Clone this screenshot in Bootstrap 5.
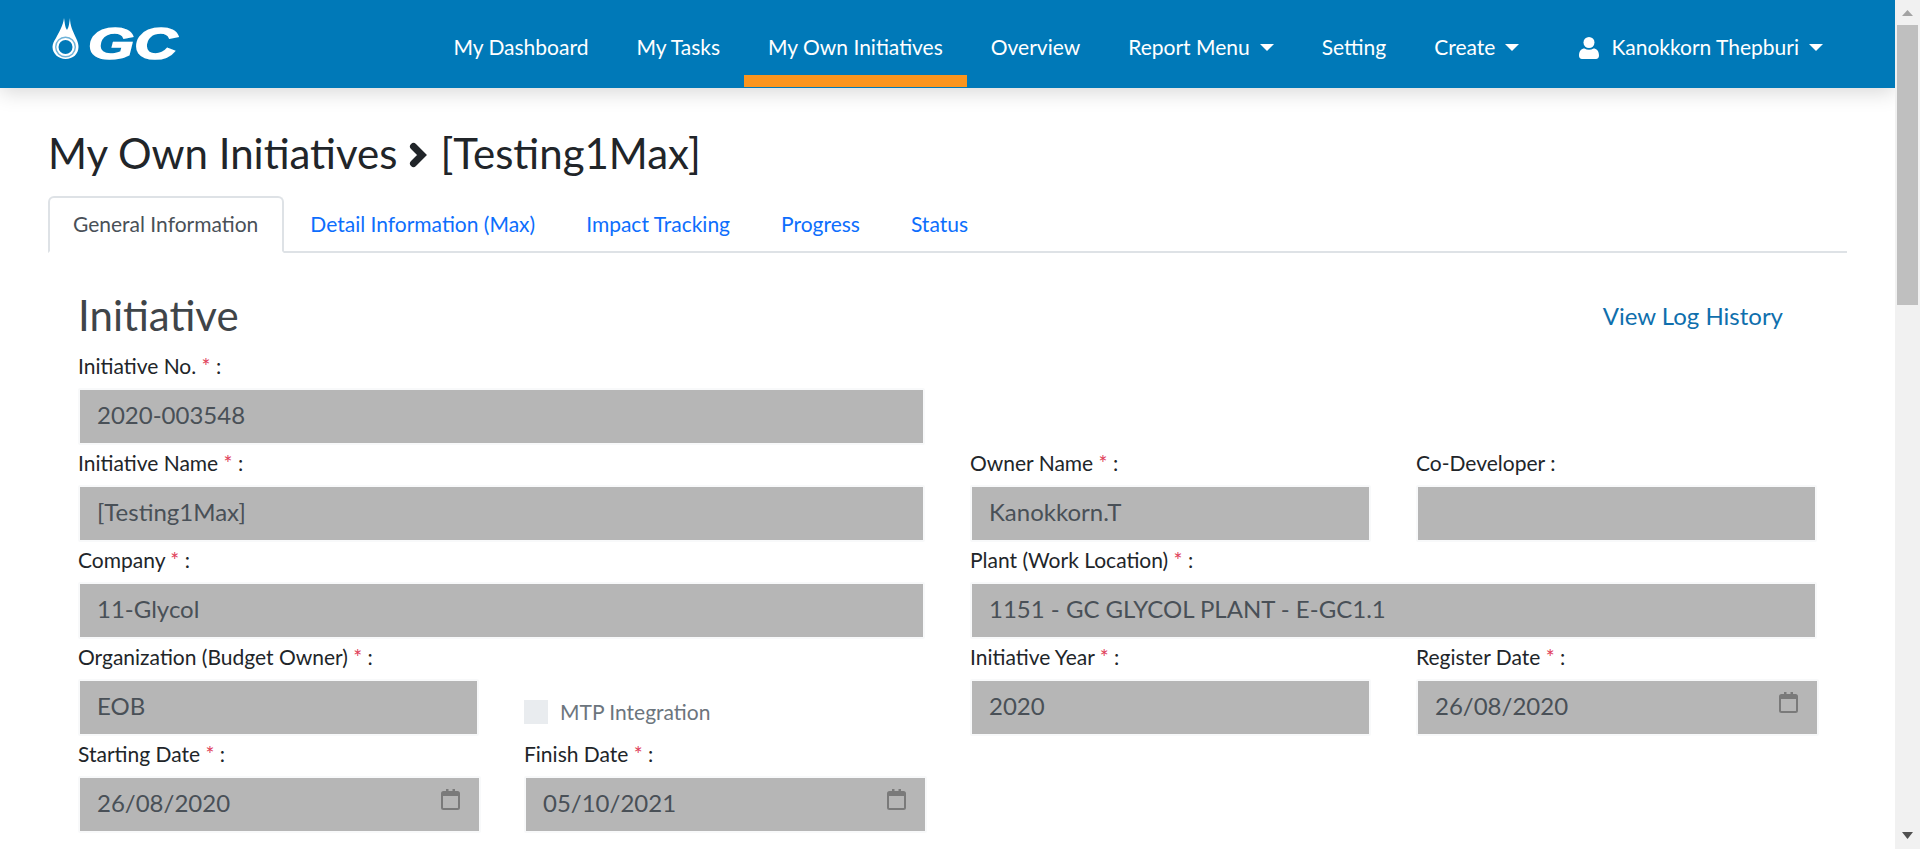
<!doctype html>
<html lang="en"><head><meta charset="utf-8"><title>My Own Initiatives</title>
<link href="https://cdn.jsdelivr.net/npm/bootstrap@5.3.0/dist/css/bootstrap.min.css" rel="stylesheet">
<style>
html,body{height:100%;overflow:hidden}
body{font-family:Lato,sans-serif;color:#212529;background:#fff}
.app-frame{height:849px}
.app-main{flex:1 1 auto;min-width:0;overflow:hidden}
.fake-scroll{width:25px;flex:none;background:#f1f1f1;height:849px}
.fake-thumb{width:21px;height:280px;background:#bfbfbf;margin:9px auto 0}
.arrow-up{margin:10px auto 0;display:block}
.arrow-down{margin:auto auto 10px;display:block}
.topbar{background:#0079b8;height:88px;box-shadow:0 4px 20px rgba(0,0,0,.16);padding:0 48px 0 50px;position:relative;z-index:2}
.topbar.navbar-expand .navbar-nav .nav-link{color:#fff;font-size:21px;padding:0 24px;height:86px;line-height:92px;white-space:nowrap;position:relative}
.topbar .dropdown-toggle::after{margin-left:10px;vertical-align:.2em;border-top-width:7px;border-left-width:7px;border-right-width:7px}
.topbar.navbar-expand .navbar-nav .nav-link.here::before{content:"";position:absolute;left:0;right:0;bottom:0;height:12px;background:#fb951e}
.topbar .who{margin-left:12px}
.who-icon{vertical-align:-4px;margin-right:12px}
.brand-link{margin-bottom:8px}
.page-body{padding:41px 48px 0}
.pagehead{font-size:42px;font-weight:400;margin:0;line-height:48px;color:#212529}
.head-chevron{margin:0 13px 0 12px;vertical-align:1px}
.tabbar{margin-top:19px;border-bottom:2px solid #dee2e6}
.tabbar .nav-link{font-size:21px;line-height:31px;padding:12px 25px 12px;color:#0d6efd;border:0;margin:0}
.tabbar .nav-item+.nav-item .nav-link{padding-left:26px;padding-right:25px}
.tabbar .nav-link.active{color:#495057;border:2px solid #dee2e6;border-bottom:2px solid #fff;border-radius:6px 6px 0 0;padding:10px 24px 12px 23px;margin-bottom:-2px}
.form-pane{padding:38px 30px 0}
.head-line{height:48px;margin-bottom:14px}
.initi{font-size:42px;font-weight:400;color:#3f4549;line-height:48px;margin:0}
.loglink{font-size:24px;color:#0f6fad;text-decoration:none;margin-right:34px;position:relative;top:1px}
.form-row{--bs-gutter-x:45px;--bs-gutter-y:0}
.form-block{height:97px}
.form-label{font-size:21px;margin:0 0 9px;line-height:26px;color:#212529;display:block}
.req{color:#e0405a}
.form-control.grey-input,.form-control.grey-input:disabled{background:#b6b6b6;border:2px solid #f8f9fa;border-radius:2px;height:57px;font-size:24px;color:#495057;padding:0 17px 5px;box-shadow:none;opacity:1}
.date-wrap{margin-right:-2px}
.date-icon{position:absolute;right:21px;top:13px}
.mtp-wrap{height:97px;padding-top:52px}
.mtp-box.form-check-input{width:24px;height:24px;margin:1px 0 0;background:#e9ecef;border:0;border-radius:0;opacity:1;float:none}
.form-check-input:disabled~.form-check-label.mtp-text{font-size:21px;color:#6c757d;opacity:1;margin-left:12px}
</style></head>
<body>
<div class="app-frame d-flex">
<div class="app-main">
<nav class="topbar navbar navbar-expand d-flex align-items-center flex-nowrap">
  <a href="#" class="d-block flex-shrink-0 brand-link" aria-label="GC">
  <svg width="130" height="44" viewBox="0 0 130 44" style="display:block">
    <path d="M14 0C15 6 15 9 17 12 19 9 19 6 20 0 20 8 23 13 26 20 28 24 28.500 27 28.500 29 28.500 36 23 41 15.500 41 9 41 2.500 36 2.500 29 2.500 26 4 23 6 20 9 14 13 8 14 0Z" fill="#fff"/>
    <circle cx="15.500" cy="29" r="9.800" fill="none" stroke="#6fb3d9" stroke-width="1.400"/>
    <circle cx="15.500" cy="29" r="7" fill="#0079b8"/>
    <text x="38" y="41" font-family="Liberation Sans, sans-serif" font-size="44" font-weight="700" font-style="italic" fill="#fff" stroke="#fff" stroke-width="1.600" textLength="89" lengthAdjust="spacingAndGlyphs">GC</text>
  </svg></a>
  <ul class="navbar-nav ms-auto">
    <li class="nav-item"><a class="nav-link" href="#">My Dashboard</a></li>
    <li class="nav-item"><a class="nav-link" href="#">My Tasks</a></li>
    <li class="nav-item"><a class="nav-link here" href="#">My Own Initiatives</a></li>
    <li class="nav-item"><a class="nav-link" href="#">Overview</a></li>
    <li class="nav-item"><a class="nav-link dropdown-toggle" href="#">Report Menu</a></li>
    <li class="nav-item"><a class="nav-link" href="#">Setting</a></li>
    <li class="nav-item"><a class="nav-link dropdown-toggle" href="#">Create</a></li>
    <li class="nav-item who"><a class="nav-link dropdown-toggle" href="#"><svg class="who-icon" width="20" height="22" viewBox="0 0 20 22" fill="#fff"><circle cx="10" cy="5.500" r="5.500"/><path d="M0 18.500c0-4.500 2.500-7 5.500-7 1.300.8 2.900 1.200 4.500 1.200s3.200-.4 4.500-1.200c3 0 5.500 2.500 5.500 7 0 2.200-1.200 3.500-3 3.500H3c-1.800 0-3-1.300-3-3.500z"/></svg>Kanokkorn Thepburi</a></li>
  </ul>
</nav>
<main class="page-body">
  <h1 class="pagehead">My Own Initiatives<svg class="head-chevron" width="18" height="26" viewBox="0 0 18 26"><path d="M4.500 4.500L13 13l-8.500 8.500" fill="none" stroke="#212529" stroke-width="7" stroke-linecap="round" stroke-linejoin="miter"/></svg>[Testing1Max]</h1>
  <ul class="nav nav-tabs tabbar">
    <li class="nav-item"><a class="nav-link active" href="#">General Information</a></li>
    <li class="nav-item"><a class="nav-link" href="#">Detail Information (Max)</a></li>
    <li class="nav-item"><a class="nav-link" href="#">Impact Tracking</a></li>
    <li class="nav-item"><a class="nav-link" href="#">Progress</a></li>
    <li class="nav-item"><a class="nav-link" href="#">Status</a></li>
  </ul>
  <section class="form-pane">
    <div class="head-line d-flex justify-content-between align-items-center">
      <h2 class="initi">Initiative</h2>
      <a class="loglink" href="#">View Log History</a>
    </div>
    <div class="row form-row">
      <div class="col-6 form-block"><label class="form-label">Initiative No. <span class="req">*</span> :</label><input class="form-control grey-input" disabled value="2020-003548"></div>
    </div>
    <div class="row form-row">
      <div class="col-6 form-block"><label class="form-label">Initiative Name <span class="req">*</span> :</label><input class="form-control grey-input" disabled value="[Testing1Max]"></div>
      <div class="col-3 form-block"><label class="form-label">Owner Name <span class="req">*</span> :</label><input class="form-control grey-input" disabled value="Kanokkorn.T"></div>
      <div class="col-3 form-block"><label class="form-label">Co-Developer :</label><input class="form-control grey-input" disabled value=""></div>
    </div>
    <div class="row form-row">
      <div class="col-6 form-block"><label class="form-label">Company <span class="req">*</span> :</label><input class="form-control grey-input" disabled value="11-Glycol"></div>
      <div class="col-6 form-block"><label class="form-label">Plant (Work Location) <span class="req">*</span> :</label><input class="form-control grey-input" disabled value="1151 - GC GLYCOL PLANT - E-GC1.1"></div>
    </div>
    <div class="row form-row">
      <div class="col-3 form-block"><label class="form-label">Organization (Budget Owner) <span class="req">*</span> :</label><input class="form-control grey-input" disabled value="EOB"></div>
      <div class="col-3 mtp-wrap"><div class="d-flex align-items-center"><input class="form-check-input mtp-box" type="checkbox" disabled id="mtp"><label class="form-check-label mtp-text" for="mtp">MTP Integration</label></div></div>
      <div class="col-3 form-block"><label class="form-label">Initiative Year <span class="req">*</span> :</label><input class="form-control grey-input" disabled value="2020"></div>
      <div class="col-3 form-block"><label class="form-label">Register Date <span class="req">*</span> :</label><div class="position-relative date-wrap"><input class="form-control grey-input" disabled value="26/08/2020"><svg class="date-icon" width="19" height="21" viewBox="0 0 19 21"><use href="#cal"/></svg></div></div>
    </div>
    <div class="row form-row">
      <div class="col-3 form-block"><label class="form-label">Starting Date <span class="req">*</span> :</label><div class="position-relative date-wrap"><input class="form-control grey-input" disabled value="26/08/2020"><svg class="date-icon" width="19" height="21" viewBox="0 0 19 21"><use href="#cal"/></svg></div></div>
      <div class="col-3 form-block"><label class="form-label">Finish Date <span class="req">*</span> :</label><div class="position-relative date-wrap"><input class="form-control grey-input" disabled value="05/10/2021"><svg class="date-icon" width="19" height="21" viewBox="0 0 19 21"><use href="#cal"/></svg></div></div>
    </div>
  </section>
</main>
</div>
<aside class="fake-scroll d-flex flex-column" aria-hidden="true">
  <svg class="arrow-up" width="11" height="6" viewBox="0 0 11 6"><path d="M5.500 0L11 6H0z" fill="#a3a3a3"/></svg>
  <div class="fake-thumb"></div>
  <svg class="arrow-down" width="11" height="7" viewBox="0 0 11 7"><path d="M0 0h11L5.500 7z" fill="#505050"/></svg>
</aside>
</div>
<svg width="0" height="0" class="position-absolute"><defs><g id="cal"><path d="M5 0h2.500v3H5zM11.500 0H14v3h-2.500z" fill="#7a7a7a"/><rect x="1" y="3" width="17" height="17" rx="1.500" fill="none" stroke="#7a7a7a" stroke-width="2"/><rect x="1" y="3" width="17" height="4" fill="#7a7a7a"/></g></defs></svg>
</body></html>
